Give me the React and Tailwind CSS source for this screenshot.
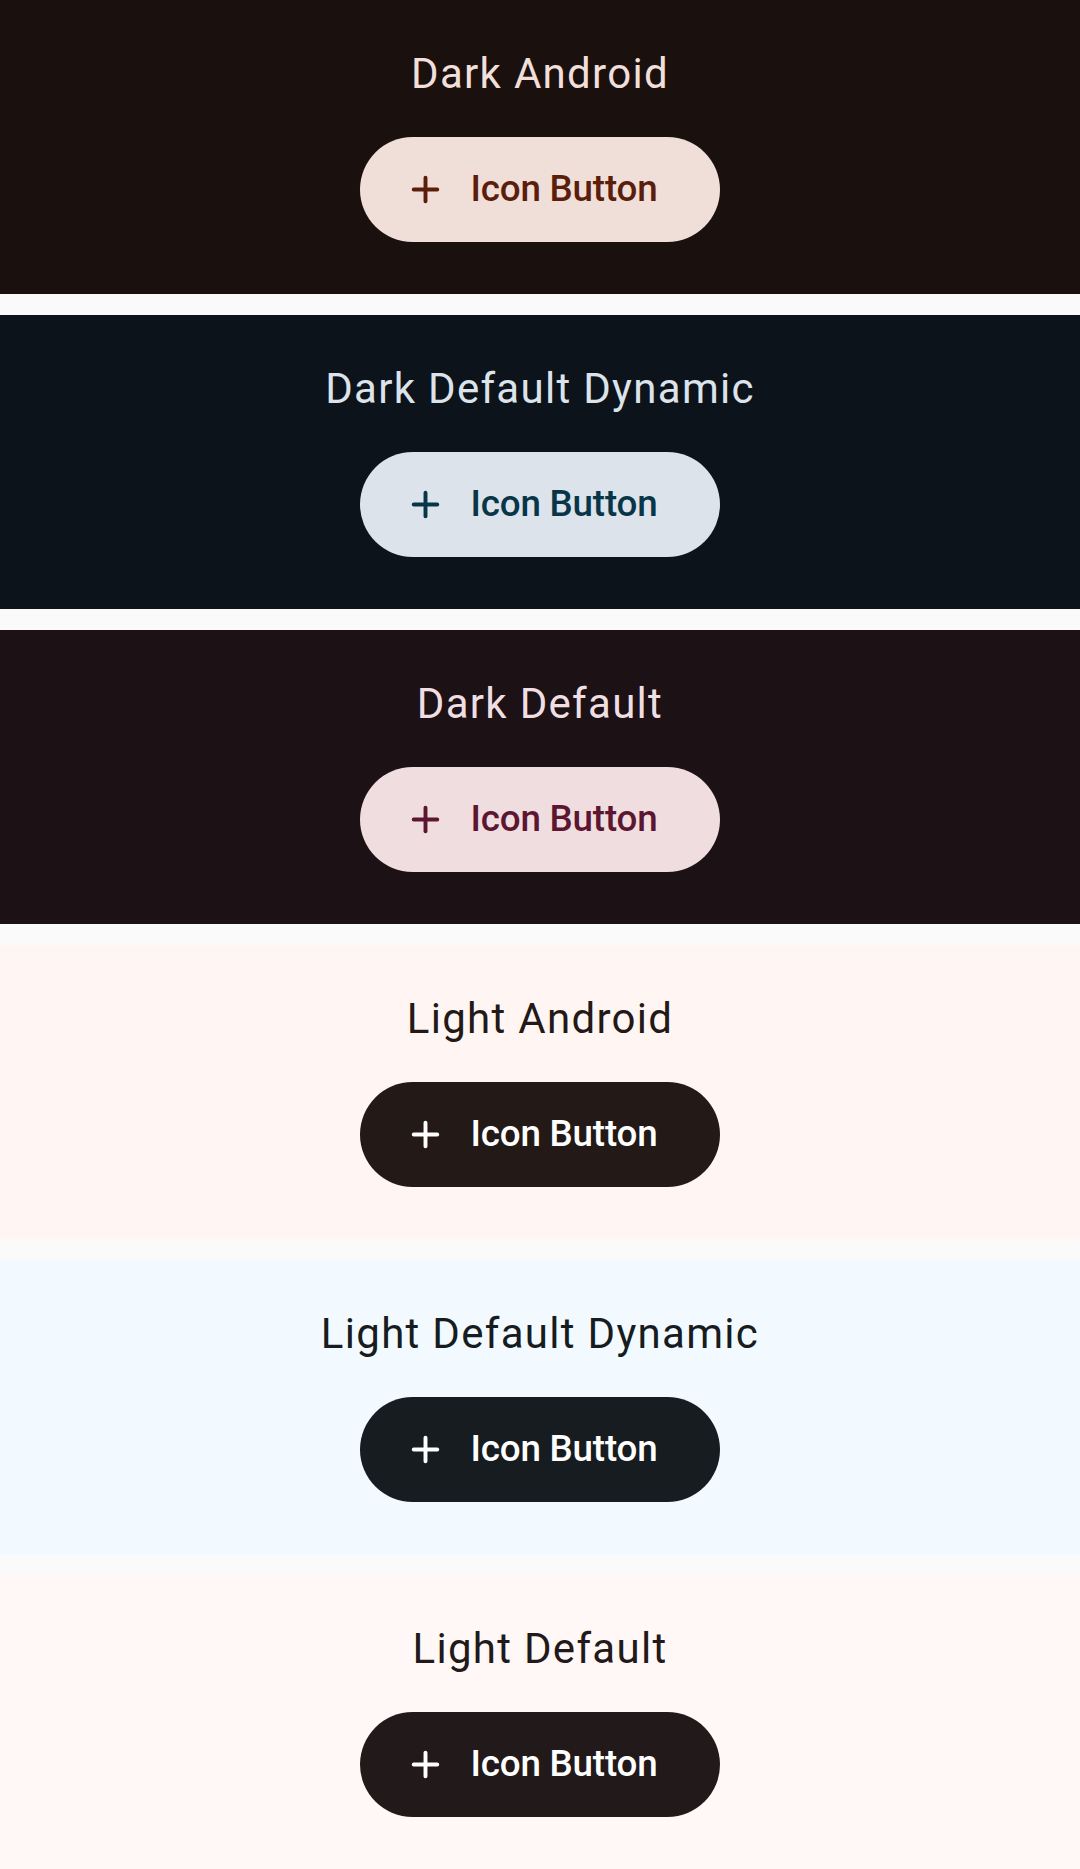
import React from "react";

const themes = [
  { name: "Dark Android", bg: "bg-[#1a110f]", title: "text-[#f1dfda]", btn: "bg-[#f0dfd9]", label: "text-[#5a1e0b]" },
  { name: "Dark Default Dynamic", bg: "bg-[#0d131a]", title: "text-[#dce3ea]", btn: "bg-[#dce3ea]", label: "text-[#083648]" },
  { name: "Dark Default", bg: "bg-[#1c1114]", title: "text-[#efdfe2]", btn: "bg-[#efdde0]", label: "text-[#5c1630]" },
  { name: "Light Android", bg: "bg-[#fff6f4]", title: "text-[#231917]", btn: "bg-[#231917]", label: "text-white" },
  { name: "Light Default Dynamic", bg: "bg-[#f3faff]", title: "text-[#171c20]", btn: "bg-[#171c20]", label: "text-white" },
  { name: "Light Default", bg: "bg-[#fff8f7]", title: "text-[#22191a]", btn: "bg-[#22191a]", label: "text-white" },
];

function AddIcon() {
  return (
    <svg viewBox="0 0 24 24" className="w-[47px] h-[47px]" fill="currentColor">
      <path d="M18 13h-5v5c0 .55-.45 1-1 1s-1-.45-1-1v-5H6c-.55 0-1-.45-1-1s.45-1 1-1h5V6c0-.55.45-1 1-1s1 .45 1 1v5h5c.55 0 1 .45 1 1s-.45 1-1 1z" />
    </svg>
  );
}

function Section({ theme }) {
  return (
    <div className={`h-[294px] flex flex-col items-center pt-[42px] ${theme.bg}`}>
      <h1 className={`text-[42px] leading-[63px] tracking-[1.3px] ${theme.title}`}>{theme.name}</h1>
      <button className={`mt-[32px] h-[105px] rounded-full flex items-center pl-[42px] pr-[63px] gap-[22px] ${theme.btn} ${theme.label}`}>
        <AddIcon />
        <span className="text-[36.75px] font-medium tracking-[-0.2px] leading-none">Icon Button</span>
      </button>
    </div>
  );
}

export default function App() {
  return (
    <div className="w-[1080px] bg-[#fafafa] flex flex-col gap-[21px]" style={{ fontFamily: "Roboto, 'Liberation Sans', sans-serif" }}>
      {themes.map((t) => (
        <Section key={t.name} theme={t} />
      ))}
    </div>
  );
}
